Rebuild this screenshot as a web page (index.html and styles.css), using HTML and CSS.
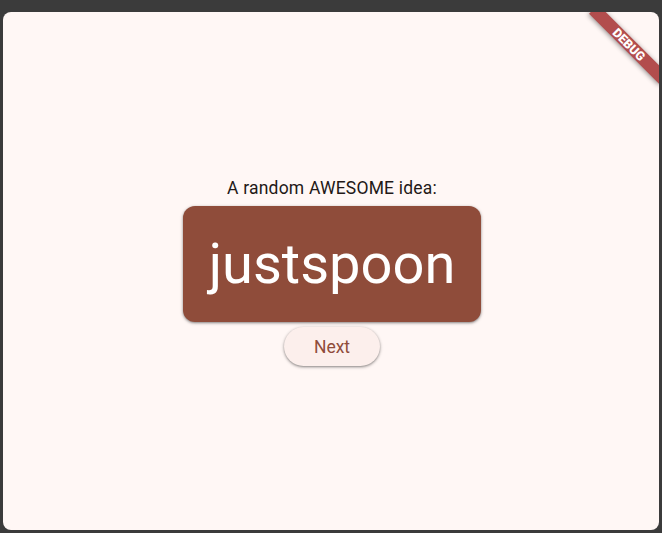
FILE: index.html
```html
<!DOCTYPE html>
<html>
<head>
<meta charset="utf-8">
<link rel="stylesheet" href="styles.css">
</head>
<body>
<div class="window">
  <div class="app">
    <main class="content">
      <p class="title">A random AWESOME idea:</p>
      <div class="card"><span class="word">justspoon</span></div>
      <button class="next">Next</button>
    </main>
    <div class="banner"><span>DEBUG</span></div>
  </div>
</div>
</body>
</html>
```
FILE: styles.css
```css
html, body {
  margin: 0;
  padding: 0;
  width: 662px;
  height: 533px;
  background: #3b3b3b;
  overflow: hidden;
}
.window {
  padding: 12px 3px 3px 3px;
  height: 533px;
  box-sizing: border-box;
}
.app {
  position: relative;
  height: 518px;
  background: #fff7f5;
  border-radius: 8px;
  overflow: hidden;
  font-family: Roboto, "Noto Sans", sans-serif;
}
.content {
  height: 100%;
  box-sizing: border-box;
  padding-left: 2px;
  display: flex;
  flex-direction: column;
  align-items: center;
  justify-content: center;
}
.title {
  margin: 0 0 6px 0;
  font-size: 17.5px;
  line-height: 24px;
  color: #231917;
  letter-spacing: 0.2px;
}
.card {
  width: 298px;
  height: 116px;
  box-sizing: border-box;
  background: #8f4c3a;
  border-radius: 12px;
  display: flex;
  align-items: center;
  justify-content: center;
  box-shadow: 0 1px 2px rgba(0,0,0,0.3), 0 1px 3px 1px rgba(0,0,0,0.15);
}
.word {
  color: #ffffff;
  font-size: 56px;
  line-height: 64px;
}
.next {
  margin-top: 5px;
  width: 96px;
  height: 39px;
  border: none;
  border-radius: 20px;
  background: #fcefec;
  color: #8f4c3a;
  font-family: Roboto, "Noto Sans", sans-serif;
  font-size: 17.5px;
  font-weight: 400;
  box-shadow: 0 1px 2px rgba(0,0,0,0.3), 0 1px 3px 1px rgba(0,0,0,0.15);
  padding: 0;
}
.banner {
  position: absolute;
  right: -20px;
  top: 25.5px;
  width: 100px;
  height: 13px;
  transform: rotate(45deg);
  transform-origin: center;
  background: #b24d4d;
  box-shadow: 0 1px 5px rgba(0,0,0,0.45);
  display: flex;
  align-items: center;
  justify-content: center;
}
.banner span {
  color: #fff;
  font-family: Roboto, "DejaVu Sans", sans-serif;
  font-weight: 900;
  font-size: 12.5px;
  line-height: 13px;
  letter-spacing: 0;
}
```
